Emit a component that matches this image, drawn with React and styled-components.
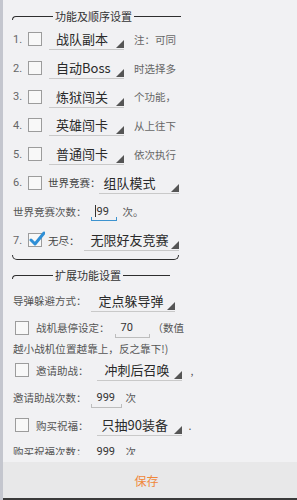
import React from "react";
import styled, { createGlobalStyle } from "styled-components";

const Global = createGlobalStyle`
  html, body { margin: 0; padding: 0; background: #f1f1f3; }
  body { font-family: "Noto Sans CJK SC", "Noto Sans", sans-serif; }
`;

const Page = styled.div`
  width: 297px;
  height: 500px;
  display: flex;
  flex-direction: column;
  overflow: hidden;
  background: #f1f1f3;
  box-sizing: border-box;
  border-left: 3px solid #c4c6ce;
`;

const Scroll = styled.div`
  height: 455px;
  flex: none;
  overflow: hidden;
  padding: 9px 0 0 10px;
  box-sizing: border-box;
`;

const Gap = styled.div`
  height: 7px;
  flex: none;
`;

const Section = styled.div`
  display: flex;
  flex-direction: column;
  margin-bottom: ${(p) => p.$mb || 0}px;
`;

const Header = styled.div`
  display: flex;
  align-items: center;
  height: 14px;
  margin-left: -1px;
  margin-bottom: ${(p) => p.$mb || 0}px;
`;

const LeftLine = styled.div`
  width: 41px;
  height: 4px;
  margin-top: 4px;
  border-top: 1.5px solid #2e2e2e;
  border-left: 1.5px solid #2e2e2e;
  border-top-left-radius: 6px;
  box-sizing: border-box;
`;

const RightLine = styled.div`
  width: ${(p) => p.$w}px;
  border-top: 1.5px solid #2e2e2e;
  margin-top: 1px;
`;

const HeaderTitle = styled.span`
  font-size: 11px;
  color: #333;
  padding: 0 2px;
  line-height: 14px;
  white-space: nowrap;
`;

const BottomLine = styled.div`
  width: 167px;
  height: 5px;
  margin-left: -1px;
  border-bottom: 1.5px solid #2e2e2e;
  border-left: 1.5px solid #2e2e2e;
  border-right: 1.5px solid #2e2e2e;
  border-bottom-left-radius: 6px;
  border-bottom-right-radius: 6px;
  box-sizing: border-box;
`;

const Row = styled.div`
  display: flex;
  align-items: center;
  height: ${(p) => p.$h || 28.7}px;
  white-space: nowrap;
`;

const Num = styled.span`
  width: 15px;
  font-family: "Roboto", "Noto Sans", sans-serif;
  font-size: 11px;
  color: #666;
`;

const Box = styled.span`
  position: relative;
  width: 12px;
  height: 12px;
  border: 1px solid #9c9c9c;
  background: #f8f8f8;
  margin-left: ${(p) => p.$ml || 0}px;
  margin-right: ${(p) => p.$mr || 6}px;
  flex: none;
`;

const Check = styled.svg`
  position: absolute;
  left: 0px;
  top: -3px;
`;

const Label = styled.span`
  font-size: 10.5px;
  color: ${(p) => p.$c || "#555"};
  margin-left: ${(p) => p.$ml || 0}px;
`;

const Note = styled.span`
  font-size: 10.5px;
  color: #666;
  margin-left: 10px;
`;

const SpinnerBox = styled.div`
  position: relative;
  width: ${(p) => p.$w}px;
  height: 22px;
  margin-left: ${(p) => p.$ml || 0}px;
  border-bottom: 1px solid #c9c9c9;
  box-sizing: border-box;
  display: flex;
  align-items: center;
  padding-left: ${(p) => p.$pl || 7}px;
  font-size: 13px;
  color: #2a2a2a;
  flex: none;
`;

const Tri = styled.span`
  position: absolute;
  right: 0;
  bottom: 1px;
  width: 0;
  height: 0;
  border-left: 8px solid transparent;
  border-bottom: 8px solid #555;
`;

const Spinner = ({ children, w, ml, pl }) => (
  <SpinnerBox $w={w} $ml={ml} $pl={pl}>
    {children}
    <Tri />
  </SpinnerBox>
);

const EditBox = styled.div`
  position: relative;
  width: ${(p) => p.$w}px;
  height: 20px;
  margin-left: ${(p) => p.$ml || 0}px;
  padding-left: ${(p) => p.$pl || 6}px;
  box-sizing: border-box;
  display: flex;
  align-items: center;
  font-family: "Roboto", "Noto Sans", sans-serif;
  font-size: 11px;
  color: #333;
  flex: none;
  &::after {
    content: "";
    position: absolute;
    left: 0;
    right: 0;
    bottom: 0;
    height: 3px;
    border: ${(p) => (p.$focus ? "1.5px solid #3d93cf" : "1px solid #bdbdbd")};
    border-top: none;
  }
`;

const Cursor = styled.span`
  display: inline-block;
  width: 1px;
  height: 12px;
  background: #333;
  margin-right: 1px;
`;

const Tail = styled.span`
  font-size: 10.5px;
  color: #555;
  margin-left: ${(p) => p.$ml || 5}px;
`;

const WrapLine = styled.div`
  font-size: 10.6px;
  color: #555;
  height: 16px;
  line-height: 16px;
  white-space: nowrap;
`;

const Bar = styled.div`
  flex: 1;
  background: #e8e8e9;
  display: flex;
  align-items: center;
  justify-content: center;
  padding-right: 7px;
  box-sizing: border-box;
  border-bottom: 2px solid #3a3a3a;
`;

const Save = styled.span`
  font-size: 12px;
  color: #f0873a;
`;

const SectionHeader = ({ title, mb }) => (
  <Header $mb={mb}>
    <LeftLine />
    <HeaderTitle>{title}</HeaderTitle>
    <RightLine $w={47} />
  </Header>
);

const CheckBox = ({ checked, ml, mr }) => (
  <Box $ml={ml} $mr={mr}>
    {checked && (
      <Check width="16" height="15" viewBox="0 0 16 15">
        <path d="M2 9 L6 13 L15 2" fill="none" stroke="#2f8fd6" strokeWidth="3" strokeLinecap="round" strokeLinejoin="round" />
      </Check>
    )}
  </Box>
);

const orderRows = [
  ["1.", "战队副本", "注：可同"],
  ["2.", "自动Boss", "时选择多"],
  ["3.", "炼狱闯关", "个功能，"],
  ["4.", "英雄闯卡", "从上往下"],
  ["5.", "普通闯卡", "依次执行"],
];

export default function App() {
  return (
    <>
      <Global />
      <Page>
        <Scroll>
          <Section $mb={8}>
            <SectionHeader title="功能及顺序设置" mb={2} />
            {orderRows.map(([n, s, note]) => (
              <Row key={n}>
                <Num>{n}</Num>
                <CheckBox mr={7} />
                <Spinner w={75}>{s}</Spinner>
                <Note>{note}</Note>
              </Row>
            ))}
            <Row>
              <Num>6.</Num>
              <CheckBox mr={6} />
              <Label $c="#444">世界竞赛：</Label>
              <Spinner w={80} ml={-2} pl={5}>组队模式</Spinner>
            </Row>
            <Row>
              <Label>世界竞赛次数：</Label>
              <EditBox $w={26} $ml={4} $pl={4} $focus>
                <Cursor />
                99
              </EditBox>
              <Tail $ml={6}>次。</Tail>
            </Row>
            <Row>
              <Num>7.</Num>
              <CheckBox checked mr={6} />
              <Label $c="#444">无尽：</Label>
              <Spinner w={95} ml={4} pl={7}>无限好友竞赛</Spinner>
            </Row>
            <BottomLine />
          </Section>
          <Section>
            <SectionHeader title="扩展功能设置" mb={5} />
            <Row $h={28}>
              <Label>导弹躲避方式：</Label>
              <Spinner w={84} ml={4} pl={8}>定点躲导弹</Spinner>
            </Row>
            <Row $h={26}>
              <CheckBox ml={2} mr={7} />
              <Label>战机悬停设定：</Label>
              <EditBox $w={35} $ml={5} $pl={6}>70</EditBox>
              <Tail $ml={3}>（数值</Tail>
            </Row>
            <WrapLine>越小战机位置越靠上，反之靠下!)</WrapLine>
            <Row $h={27}>
              <CheckBox ml={2} mr={7} />
              <Label>邀请助战：</Label>
              <Spinner w={85} ml={8} pl={8}>冲刺后召唤</Spinner>
              <Tail $ml={9}>,</Tail>
            </Row>
            <Row $h={28}>
              <Label>邀请助战次数：</Label>
              <EditBox $w={31} $ml={4} $pl={6}>999</EditBox>
              <Tail $ml={4}>次</Tail>
            </Row>
            <Row $h={27}>
              <CheckBox ml={2} mr={7} />
              <Label>购买祝福：</Label>
              <Spinner w={85} ml={8} pl={5}>只抽90装备</Spinner>
              <Tail $ml={7}>.</Tail>
            </Row>
            <Row $h={26}>
              <Label>购买祝福次数：</Label>
              <EditBox $w={31} $ml={4} $pl={6}>999</EditBox>
              <Tail $ml={4}>次</Tail>
            </Row>
          </Section>
        </Scroll>
        <Gap />
        <Bar>
          <Save>保存</Save>
        </Bar>
      </Page>
    </>
  );
}
